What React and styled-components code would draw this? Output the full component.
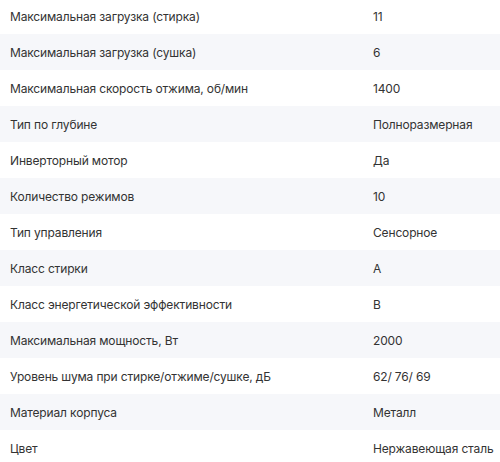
import React from 'react';
import styled, { createGlobalStyle } from 'styled-components';

const GlobalStyle = createGlobalStyle`
    html, body {
        margin: 0;
        padding: 0;
        background: #ffffff;
    }
    body {
        font-family: Inter, "Noto Sans", sans-serif;
        overflow: hidden;
    }
`;

const specs = [
    ['Максимальная загрузка (стирка)', '11'],
    ['Максимальная загрузка (сушка)', '6'],
    ['Максимальная скорость отжима, об/мин', '1400'],
    ['Тип по глубине', 'Полноразмерная'],
    ['Инверторный мотор', 'Да'],
    ['Количество режимов', '10'],
    ['Тип управления', 'Сенсорное'],
    ['Класс стирки', 'A'],
    ['Класс энергетической эффективности', 'B'],
    ['Максимальная мощность, Вт', '2000'],
    ['Уровень шума при стирке/отжиме/сушке, дБ', '62/ 76/ 69'],
    ['Материал корпуса', 'Металл'],
    ['Цвет', 'Нержавеющая сталь'],
];

const SpecTable = styled.div`
    margin-top: -2px;
    width: 500px;
    display: flex;
    flex-direction: column;
`;

const SpecRow = styled.div`
    display: grid;
    grid-template-columns: 373px 1fr;
    align-items: center;
    height: 36px;
    background: ${props => props.striped ? '#f6f7fa' : '#ffffff'};
`;

const SpecName = styled.div`
    padding-left: 10px;
    font-size: 12px;
    letter-spacing: -0.15px;
    color: #333333;
    white-space: nowrap;
`;

const SpecValue = styled.div`
    font-size: 12px;
    letter-spacing: -0.15px;
    color: #333333;
    white-space: nowrap;
`;

export default function App() {
    return (
        <>
            <GlobalStyle />
            <SpecTable>
                {specs.map(([name, value], i) => (
                    <SpecRow key={name} striped={i % 2 === 1}>
                        <SpecName>{name}</SpecName>
                        <SpecValue>{value}</SpecValue>
                    </SpecRow>
                ))}
            </SpecTable>
        </>
    );
}
